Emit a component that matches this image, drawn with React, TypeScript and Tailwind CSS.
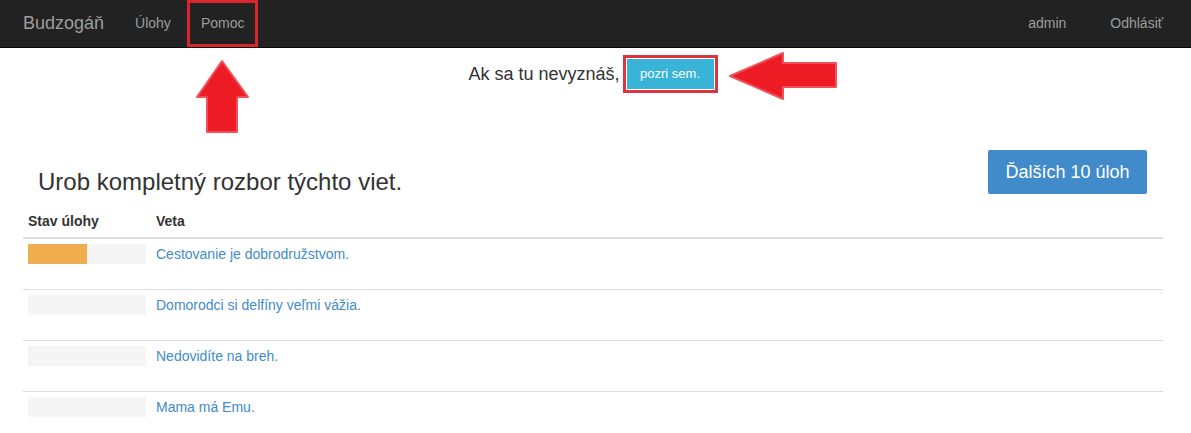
import React from 'react';

const tasks = [
  { text: 'Cestovanie je dobrodružstvom.', progress: 50 },
  { text: 'Domorodci si delfíny veľmi vážia.', progress: 0 },
  { text: 'Nedovidíte na breh.', progress: 0 },
  { text: 'Mama má Emu.', progress: 0 },
];

const App = () => {
  return (
    <div className="relative min-h-[433px] w-full bg-white font-['Liberation_Sans',Arial,sans-serif] text-[14px] text-[#333]">
      {/* navbar */}
      <nav className="flex h-[48px] items-stretch border-b border-[#080808] bg-[#222]">
        <a className="ml-[23px] flex items-center text-[18px] text-[#9d9d9d]">Budzogáň</a>
        <a className="ml-[31px] flex items-center text-[#9d9d9d]">Úlohy</a>
        <a className="ml-[16px] flex items-center border-[3px] border-[#d9262d] px-[11px] text-[#9d9d9d]">
          Pomoc
        </a>
        <div className="ml-auto mr-[28px] flex items-stretch">
          <a className="flex items-center text-[#9d9d9d]">admin</a>
          <a className="ml-[44px] flex items-center text-[#9d9d9d]">Odhlásiť</a>
        </div>
      </nav>

      {/* help line */}
      <div className="mt-[7px] flex items-center justify-center pr-[5px]">
        <span className="text-[18px] text-[#333]">Ak sa tu nevyznáš,</span>
        <span className="ml-[3px] border-[3px] border-[#e0343c] p-px">
          <button className="flex h-[30px] w-[87px] items-center justify-center bg-[#39b3d7] text-[13px] text-white">
            pozri sem.
          </button>
        </span>
      </div>

      {/* heading + more */}
      <div className="mt-[57px] flex items-start justify-between pl-[38px] pr-[44px]">
        <h1 className="mt-[17px] text-[24px] leading-[30px] text-[#333]">Urob kompletný rozbor týchto viet.</h1>
        <button className="h-[44px] w-[159px] rounded-[2px] bg-[#428bca] text-[18px] text-white">
          Ďalších 10 úloh
        </button>
      </div>

      {/* table */}
      <div className="ml-[23px] mr-[28px] mt-[14px]">
        <div className="flex h-[28px] items-start border-b-2 border-[#ddd] font-bold">
          <div className="w-[133px] pl-[5px]">Stav úlohy</div>
          <div>Veta</div>
        </div>
        {tasks.map((t, i) => (
          <div
            key={i}
            className={i > 0 ? 'flex h-[51px] items-start border-t border-[#ddd] pt-[5px]' : 'flex h-[50px] items-start pt-[5px]'}
          >
            <div className="w-[133px] pl-[5px]">
              <div className="h-[20px] w-[118px] bg-[#f5f5f5]">
                <div className="h-full bg-[#f0ad4e]" style={{ width: `${t.progress}%` }} />
              </div>
            </div>
            <a className="leading-[20px] text-[#428bca]">{t.text}</a>
          </div>
        ))}
      </div>

      {/* arrows */}
      <svg className="absolute left-[190px] top-[55px]" width="66" height="82" viewBox="0 0 66 82">
        <polygon
          points="32,6 7,42 17,42 17,77 47,77 47,42 58,42"
          fill="#ed1c24"
          stroke="#f0505a"
          strokeWidth="2"
          strokeLinejoin="round"
        />
      </svg>
      <svg className="absolute left-[725px] top-[48px]" width="116" height="56" viewBox="0 0 116 56">
        <polygon
          points="5,28 58,5 58,15 111,15 111,39 58,39 58,51"
          fill="#ed1c24"
          stroke="#f0505a"
          strokeWidth="2"
          strokeLinejoin="round"
        />
      </svg>
    </div>
  );
};

export default App;
